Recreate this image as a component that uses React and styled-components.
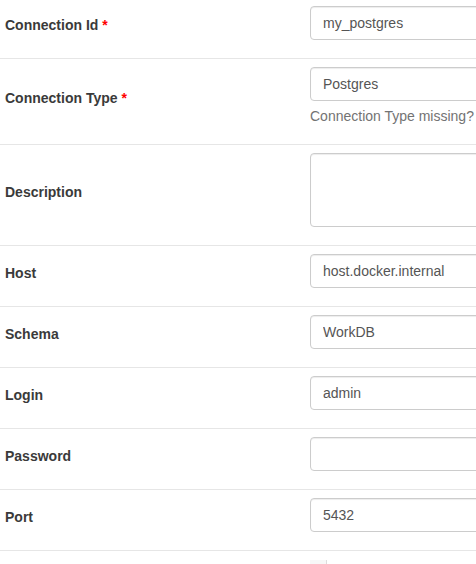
import React from 'react'
import styled, { createGlobalStyle } from 'styled-components'

const fields = [
  { label: 'Connection Id', required: true, value: 'my_postgres' },
  {
    label: 'Connection Type',
    required: true,
    value: 'Postgres',
    help: 'Connection Type missing?',
  },
  { label: 'Description', multiline: true },
  { label: 'Host', value: 'host.docker.internal' },
  { label: 'Schema', value: 'WorkDB' },
  { label: 'Login', value: 'admin' },
  { label: 'Password', value: '', type: 'password' },
  { label: 'Port', value: '5432' },
]

const App = () => {
  return (
    <>
      <GlobalStyle />
      <Page>
        <FormTable>
          {fields.map((field) => (
            <Row key={field.label}>
              <LabelCell>
                <Label>
                  {field.label}
                  {field.required && <Required> *</Required>}
                </Label>
              </LabelCell>
              <FieldCell>
                <Field>
                  {field.multiline ? (
                    <TextArea rows={3} readOnly />
                  ) : (
                    <Input
                      type={field.type || 'text'}
                      defaultValue={field.value}
                      readOnly
                    />
                  )}
                  {field.help && <HelpText>{field.help}</HelpText>}
                </Field>
              </FieldCell>
            </Row>
          ))}
          {/* extra json editor, label sits below the fold */}
          <Row>
            <LabelCell />
            <FieldCell>
              <Editor>
                <Gutter />
                <EditorBody />
              </Editor>
            </FieldCell>
          </Row>
        </FormTable>
      </Page>
    </>
  )
}

const GlobalStyle = createGlobalStyle`
  html, body {
    margin: 0;
    padding: 0;
    background: #fff;
    overflow: hidden;
  }

  body {
    font-family: 'Liberation Sans', Arial, sans-serif;
    font-size: 14px;
    line-height: 20px;
    color: #333;
  }
`

const Page = styled.div`
  width: 900px;
  margin-top: -3px;
`

const FormTable = styled.div`
  display: flex;
  flex-direction: column;
`

const Row = styled.div`
  display: grid;
  grid-template-columns: 302px 1fr;
  border-top: 1px solid #e6e6e6;

  &:first-child {
    border-top: none;
    padding-top: 1px;
  }
`

const LabelCell = styled.div`
  display: flex;
  align-items: center;
  padding: 8px 8px 8px 5px;
`

const Label = styled.label`
  display: inline-block;
  margin-bottom: 7px;
  font-weight: bold;
  color: #3a3a3a;
`

const Required = styled.span`
  color: #ff0000;
`

const FieldCell = styled.div`
  padding: 8px;
`

const Field = styled.div`
  display: flex;
  flex-direction: column;
  padding-bottom: 10px;
`

const controlStyle = `
  display: block;
  box-sizing: border-box;
  width: 100%;
  padding: 6px 12px;
  font-family: 'Liberation Sans', Arial, sans-serif;
  font-size: 14px;
  line-height: 20px;
  color: #555;
  background: #fff;
  border: 1px solid #ccc;
  border-radius: 4px;
  box-shadow: inset 0 1px 1px rgba(0, 0, 0, 0.075);
  outline: none;
  margin: 0;
`

const Input = styled.input`
  ${controlStyle}
  height: 34px;
`

const TextArea = styled.textarea`
  ${controlStyle}
  height: 74px;
  resize: none;
`

const HelpText = styled.span`
  display: block;
  margin-top: 5px;
  color: #737373;
`

const Editor = styled.div`
  display: flex;
  height: 160px;
  margin-top: 1px;
`

const Gutter = styled.div`
  width: 16px;
  background: #f7f7f7;
  border-right: 1px solid #ddd;
`

const EditorBody = styled.div`
  flex: 1;
  background: #fff;
`

export default App
